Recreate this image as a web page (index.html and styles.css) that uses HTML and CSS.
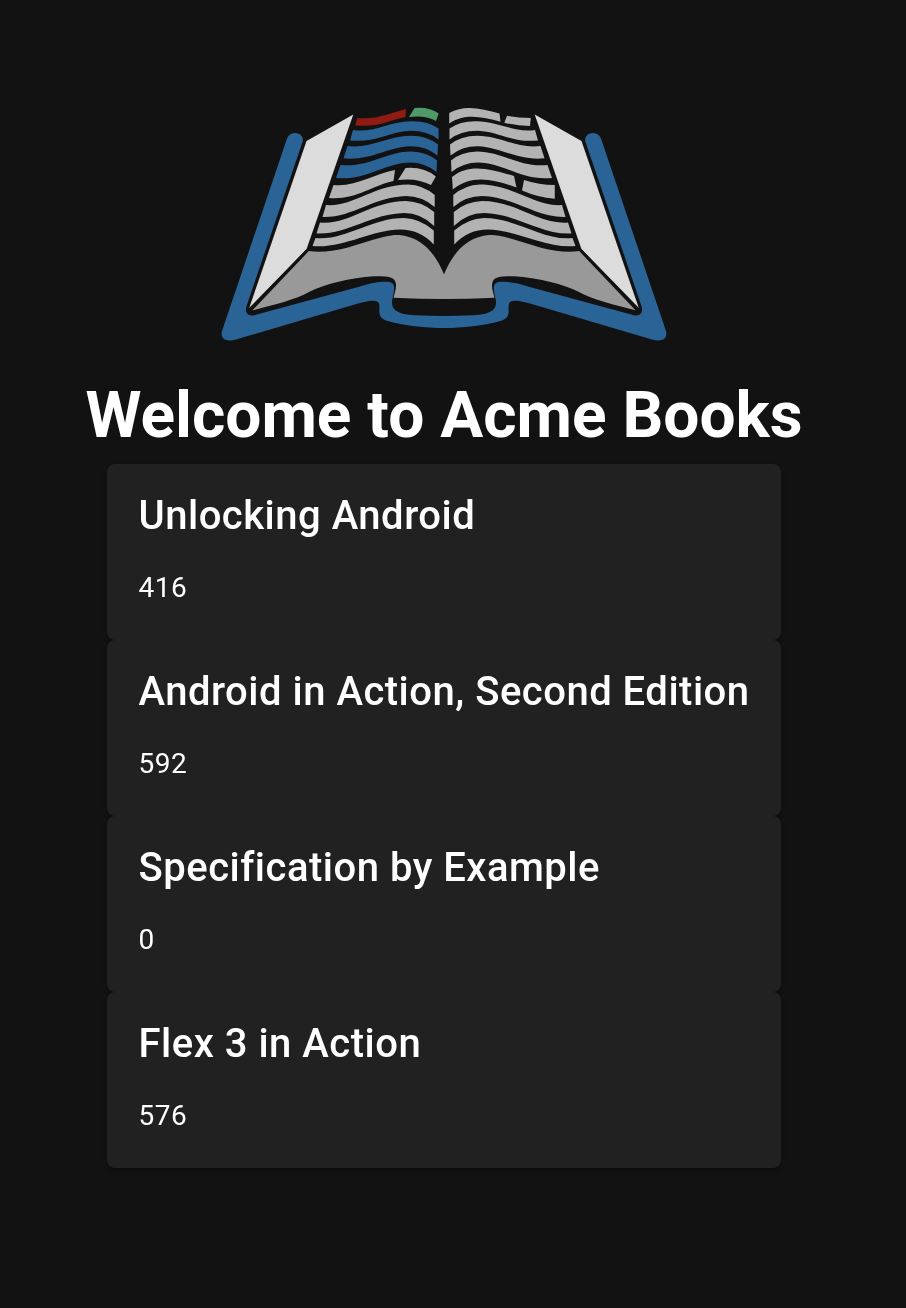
FILE: index.html
```html
<!DOCTYPE html>
<html lang="en">
<head>
<meta charset="utf-8">
<title>Acme Books</title>
<link rel="stylesheet" href="styles.css">
</head>
<body>
<main class="page">
  <svg class="logo" viewBox="214 100 460 248" role="img" aria-label="Open book">
    <defs>
      <g id="half">
        <path class="cover" d="M287 138.500C290 131.500 299 131.500 302 136.500Q303.500 139 302.500 142L246.500 306C244.500 313 248 317 255 315L360 286.500Q372 282.500 383 281.800C391 281.300 394.300 283 394.200 288C394 294 392 298 392 303C392 311 400 314.500 415 315.300Q430 316 444.500 316V328C425 328 405 326 386 320.500C377 317 380 311 379.300 305C379 301 375 300.500 369 301Q363 302 358 303.500L236 339.500C226 342.500 220 339 222 331Z"/>
        <path class="leaf" d="M353.300 114.500L306.500 141L248.700 309.500L306.500 249.300Z"/>
        <path class="block" d="M308.800 251C330 254 350 247 365 242.300C383 236.500 392 234.500 399 235C421 237 435 252 444.300 275V299Q419 299 393.500 297.700C395 292 397 287 395.500 282C394 276 383 276 374 276.300C350 278 325 284 310 291.500C295 300 273 305 252.500 310.300Z"/>
        <path class="line" d="M326 205C354 207 374 184.500 408 184.500Q423 185 434.700 195V207Q422 196 406 196C373 197 352 218 322.500 217Z"/>
        <path class="line" d="M320 222.500C350 225 371 201 406 201Q422 201.500 434.200 212V226Q421 213 404 213C370 214 347 235 316.500 233.500Z"/>
        <path class="line" d="M315.500 238C345 241 371 218 404 218Q420 218.500 433.800 230.500V244.500Q420 229.500 400 229.500C371 230 342 249 312.500 246Z"/>
      </g>
      <g id="upper">
        <path d="M353 130C375 133 388 121.500 412 121.200Q428 121 438.500 128.500V139.500Q427 130.500 410 130.800C388 132 376 143 350 140.500Z"/>
        <path d="M347.500 146C371 149 387 136 411 135.800Q427 136 438 144.500L437.500 155.500Q426 146 410 146.200C387 147 371 161 343.500 158.300Z"/>
        <path d="M340.500 165C368 168 386 151.500 411 151.500Q427 152 437 160.500L436.500 172Q425 162.500 410 162.500C384 163 366 181 336 178Z"/>
      </g>
    </defs>
    <use href="#half"/>
    <use href="#half" transform="matrix(-1 0 0 1 888 0)"/>
    <use class="cover" href="#upper"/>
    <use class="line" href="#upper" transform="matrix(-1 0 0 1 888 0)"/>
    <path class="edge" d="M248 311L307.500 250M640 311L580.500 250"/>
    <path class="red" d="M357.500 118C376 120 390 113 406 109L405.500 117C387 121 377 128 355 125.200Z"/>
    <path class="green" d="M414.500 108Q429 106.500 438.700 113.500L436 121Q426 115 409 117Z"/>
    <path class="line" d="M333.500 185C357 187 373 174 395 170L393.500 181C371 186 356 200 329 198Z"/>
    <path class="line" d="M405.500 168Q424 166.500 435.800 176.500L431 185Q417 177.500 398 180Z"/>
    <path class="line" d="M449.200 113C465 104 482 109 499.500 113.500L500.500 121.700C482 117 465 113 449.200 123.500Z"/>
    <path class="line" d="M507 115.800Q518 118 530.800 118L530 126Q517 126 504.300 122.700Z"/>
    <path class="line" d="M452 177C470 162 493 170 514 176L516.500 187.500C496 180 472 173 452.800 189.500Z"/>
    <path class="line" d="M524 180Q539 185 554.800 185V198.700Q538 197.500 522 190.500Z"/>
  </svg>
  <h1 class="heading">Welcome to Acme Books</h1>
  <section class="books">
    <article class="card"><h2 class="title">Unlocking Android</h2><p class="pages">416</p></article>
    <article class="card"><h2 class="title">Android in Action, Second Edition</h2><p class="pages">592</p></article>
    <article class="card"><h2 class="title">Specification by Example</h2><p class="pages">0</p></article>
    <article class="card"><h2 class="title">Flex 3 in Action</h2><p class="pages">576</p></article>
  </section>
</main>
</body>
</html>
```
FILE: styles.css
```css
* { box-sizing: border-box; }
body {
  margin: 0;
  min-height: 1308px;
  background: #121212;
  color: #fff;
  font-family: Roboto, sans-serif;
}
.page {
  width: 888px;
  padding-top: 100px;
  display: flex;
  flex-direction: column;
  align-items: center;
}
.logo { display: block; width: 460px; height: 248px; }
.cover { fill: #2a6496; }
.leaf { fill: #dcdcdc; }
.block { fill: #999; }
.line { fill: #b3b3b3; }
.red { fill: #8f1b13; }
.green { fill: #509a6a; }
.edge { fill: none; stroke: #121212; stroke-width: 2.6; }
.heading {
  margin: 20px 0 0;
  font-size: 64px;
  font-weight: 700;
  line-height: 96px;
  white-space: nowrap;
}
.books {
  width: 674px;
  filter: drop-shadow(0 2px 2px rgba(0, 0, 0, .35));
}
.card {
  height: 176px;
  padding: 20px 31.5px;
  border-radius: 8px;
  background: #212121;
}
.title {
  margin: 0;
  font-size: 40px;
  font-weight: 500;
  line-height: 64px;
  letter-spacing: .5px;
  white-space: nowrap;
}
.pages {
  margin: 20px 0 0;
  font-size: 28px;
  line-height: 40px;
  letter-spacing: .5px;
}
```
